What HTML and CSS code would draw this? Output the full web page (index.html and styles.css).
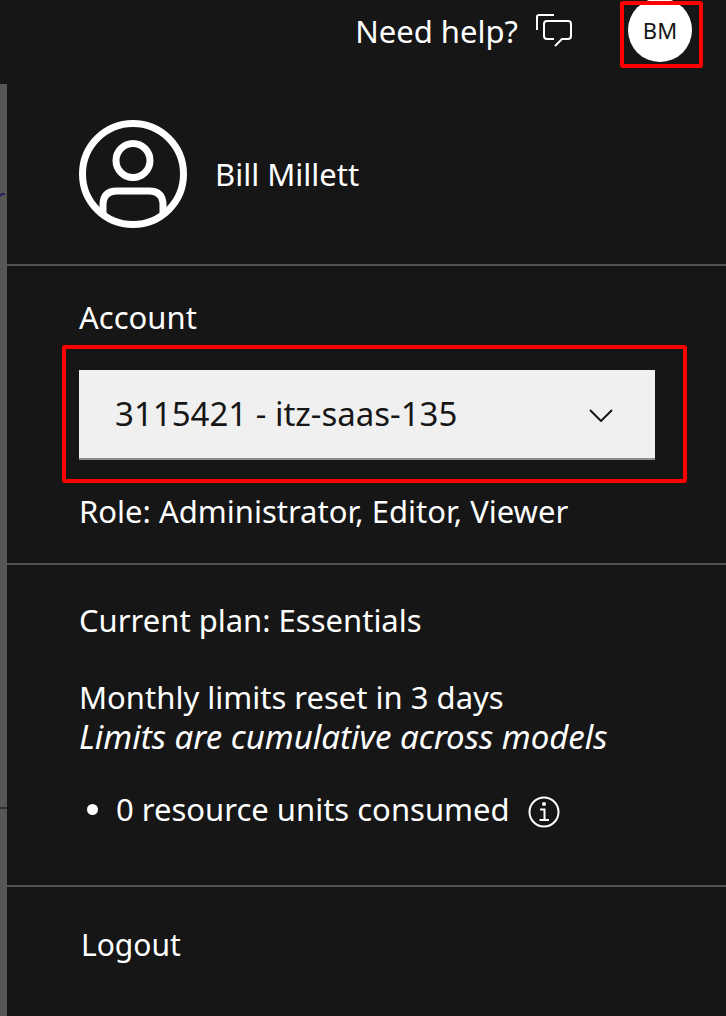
FILE: index.html
```html
<!DOCTYPE html>
<html lang="en">
<head>
<meta charset="utf-8">
<meta name="viewport" content="width=device-width, initial-scale=1">
<title>Account menu</title>
<link rel="stylesheet" href="styles.css">
</head>
<body>
<header class="topbar">
  <button class="help" type="button">Need help?
    <svg class="help-icon" viewBox="0 0 40 36" aria-hidden="true"><path d="M3 17V4Q3 2 5 2H20M20 26H13Q10 26 10 23V11Q10 8 13 8H34Q37 8 37 11V23Q37 26 34 26H28L21 33"/></svg>
  </button>
  <button class="avatar marked" type="button" aria-label="Profile BM"><span class="avatar-disc">BM</span></button>
</header>
<div class="body">
  <div class="backdrop" aria-hidden="true">
    <svg class="scribble" viewBox="0 0 7 4"><path d="M0 3L2 1H5"/></svg>
    <span class="backdrop-line"></span>
  </div>
  <main class="panel">
    <section class="profile">
      <svg class="person" viewBox="0 0 108 108" aria-hidden="true"><circle cx="54" cy="54" r="50.5"/><circle cx="54" cy="40.500" r="17"/><path d="M24 94V85Q24 71 38 71H70Q84 71 84 85V94"/></svg>
      <span>Bill Millett</span>
    </section>
    <section class="account">
      <label for="account">Account</label>
      <div class="select-wrap marked">
        <select id="account" class="select"><option>3115421 - itz-saas-135</option></select>
        <svg class="chevron" viewBox="0 0 24 14" aria-hidden="true"><path d="M1 2L12 13L23 2"/></svg>
      </div>
      <p>Role: Administrator, Editor, Viewer</p>
    </section>
    <section class="plan">
      <p class="plan-name">Current plan: Essentials</p>
      <p>Monthly limits reset in 3 days</p>
      <p class="note">Limits are cumulative across models</p>
      <ul class="usage">
        <li><span>0 resource units consumed</span>
          <button class="info" type="button" aria-label="More information"><svg viewBox="0 0 32 32"><circle cx="16" cy="16" r="14.5"/><path d="M12 13.500H16.500V24M11.500 24H21"/><circle class="dot" cx="16" cy="8" r="2"/></svg></button>
        </li>
      </ul>
    </section>
    <a class="logout" href="#">Logout</a>
  </main>
</div>
</body>
</html>
```
FILE: styles.css
```css
* { box-sizing: border-box; }
body {
  margin: 0;
  min-height: 100vh;
  display: flex;
  flex-direction: column;
  background: #161616;
  color: #fff;
  font: 31px/40px "Noto Sans", sans-serif;
}
p { margin: 0; }
button { font: inherit; color: inherit; background: none; border: 0; padding: 0; cursor: pointer; }
svg { display: block; fill: none; stroke: currentColor; }
.topbar {
  height: 84px;
  display: flex;
  justify-content: flex-end;
  align-items: flex-start;
  gap: 46px;
  padding-right: 23px;
}
.help { display: flex; align-items: center; gap: 16px; margin-top: 11px; }
.help-icon { width: 40px; height: 36px; stroke-width: 2; }
.marked { position: relative; }
.marked::after {
  content: "";
  position: absolute;
  border: 4px solid #f00;
  border-radius: 3px;
  pointer-events: none;
}
.avatar { width: 83px; height: 68px; display: flex; padding-left: 8px; }
.avatar::after { inset: 1px 0 0; }
.avatar-disc {
  width: 64px;
  height: 64px;
  margin-top: -2px;
  border-radius: 50%;
  background: #fff;
  color: #161616;
  font-size: 22px;
  line-height: 64px;
}
.body { flex: 1; display: flex; }
.backdrop { width: 7px; background: #575757; padding-top: 109px; }
.scribble { width: 7px; height: 4px; stroke: #22225c; stroke-width: 2; }
.backdrop-line { display: block; height: 2px; margin-top: 610px; background: #333; }
.panel { flex: 1; }
.profile, .account, .plan { padding-left: 72px; padding-right: 71px; border-bottom: 2px solid #525252; }
.profile { display: flex; align-items: center; gap: 28px; padding-top: 36px; padding-bottom: 36px; }
.person { width: 108px; height: 108px; stroke-width: 7; }
.account { padding-top: 31px; padding-bottom: 32px; }
.account label { display: block; }
.select-wrap { display: grid; align-items: center; margin: 33px 0 31px; }
.select-wrap::after { inset: -25px -32px -23px -17px; }
.select, .chevron { grid-area: 1 / 1; }
.select {
  appearance: none;
  width: 100%;
  height: 90px;
  padding: 0 80px 0 36px;
  border: 0;
  border-bottom: 2px solid #8d8d8d;
  border-radius: 0;
  background: #f0f0f0;
  color: #161616;
  font: inherit;
  font-size: 33px;
}
.chevron { justify-self: end; width: 24px; height: 14px; margin-right: 42px; color: #161616; stroke-width: 2; pointer-events: none; }
.plan { padding-top: 35px; padding-bottom: 56px; }
.plan-name { margin-bottom: 37px; }
.note { font-size: 33px; font-style: italic; }
.usage { list-style: none; margin: 32px 0 0; padding: 0; }
.usage li { display: flex; align-items: center; }
.usage li::before { content: ""; width: 11px; height: 11px; margin: 0 18px 0 8px; border-radius: 50%; background: #fff; }
.info { margin: 6px 0 0 18px; }
.info svg { width: 32px; height: 32px; stroke-width: 2; }
.info .dot { fill: currentColor; stroke: none; }
.logout { display: block; padding: 38px 74px; color: inherit; font-size: 30px; text-decoration: none; }
```
